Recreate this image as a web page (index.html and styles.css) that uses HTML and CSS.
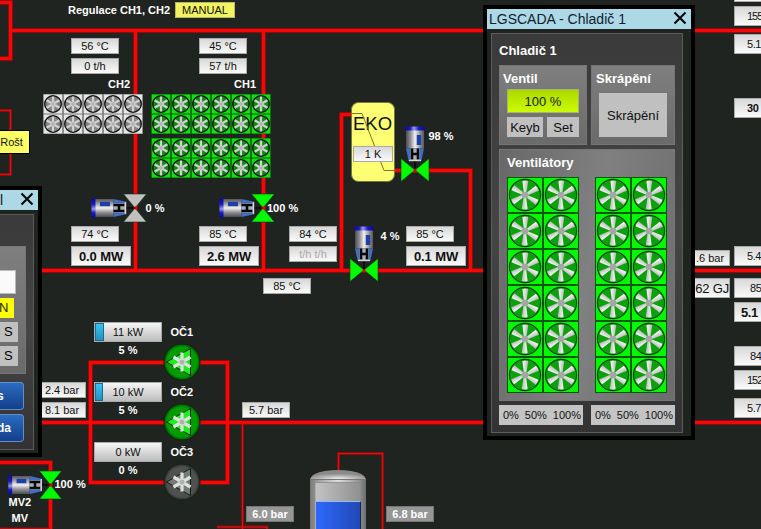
FILE: index.html
```html
<!DOCTYPE html>
<html lang="cs">
<head>
<meta charset="utf-8">
<title>LGSCADA</title>
<link rel="stylesheet" href="styles.css">
</head>
<body>
<main class="canvas">
<svg class="schema" width="761" height="529" viewBox="0 0 761 529">
  <defs>
    <linearGradient id="metal" x1="0" y1="0" x2="0" y2="1">
      <stop offset="0" stop-color="#55555c"/><stop offset=".2" stop-color="#8c8c90"/><stop offset=".5" stop-color="#f0f0f0"/><stop offset=".75" stop-color="#8e8e94"/><stop offset="1" stop-color="#4b4b50"/>
    </linearGradient>
    <linearGradient id="cap" x1="0" y1="0" x2="0" y2="1">
      <stop offset="0" stop-color="#0808a0"/><stop offset=".3" stop-color="#1a1ac0"/><stop offset=".55" stop-color="#9a9aec"/><stop offset=".75" stop-color="#1a1ac0"/><stop offset="1" stop-color="#0808a8"/>
    </linearGradient>
    <linearGradient id="blade" x1="0" y1="0" x2="1" y2="0">
      <stop offset="0" stop-color="#ffffff"/><stop offset="1" stop-color="#b4bab4"/>
    </linearGradient>
    <linearGradient id="tank" x1="0" y1="0" x2="1" y2="0">
      <stop offset="0" stop-color="#777"/><stop offset=".15" stop-color="#a0a0a0"/><stop offset=".5" stop-color="#dedede"/><stop offset=".85" stop-color="#9a9a9a"/><stop offset="1" stop-color="#6d6d6d"/>
    </linearGradient>
    <linearGradient id="tankWindow" x1="0" y1="0" x2="1" y2="0">
      <stop offset="0" stop-color="#c4c4c4"/><stop offset="1" stop-color="#8f8f8f"/>
    </linearGradient>
    <linearGradient id="water" x1="0" y1="0" x2="1" y2="0">
      <stop offset="0" stop-color="#2e68ff"/><stop offset="1" stop-color="#2049b4"/>
    </linearGradient>
    <radialGradient id="dome" cx=".5" cy="1" r=".6">
      <stop offset="0" stop-color="#eee"/><stop offset="1" stop-color="#8a8a8a"/>
    </radialGradient>
    <g id="blades">
      <path id="b" d="M-1.400 -3L-3.300 -13.800Q-.5 -14.900 2.500 -14.200L1.400 -3Z"/>
      <use href="#b" transform="rotate(60)"/><use href="#b" transform="rotate(120)"/><use href="#b" transform="rotate(180)"/><use href="#b" transform="rotate(240)"/><use href="#b" transform="rotate(300)"/>
    </g>
    <symbol id="fan" viewBox="0 0 36 36">
      <rect class="fan-case" x=".5" y=".5" width="35" height="35"/>
      <circle class="fan-ring" cx="18" cy="18" r="15.6"/>
      <g transform="translate(18 18) rotate(3)"><use href="#blades" fill="url(#blade)"/></g>
      <circle cx="18" cy="18" r="3.2" fill="#a6a6a6"/>
    </symbol>
    <g id="minifan">
      <rect class="mini-case" x="-10" y="-10" width="20" height="20"/>
      <rect class="mini-face" x="-9.2" y="-9.5" width="18.4" height="19"/>
      <circle class="mini-ring" r="8.3"/>
      <g class="mini-blades"><path d="M0 -7.4V7.4M-6.4 -3.7L6.4 3.7M-6.4 3.7L6.4 -3.7"/></g>
      <circle r="1.9" fill="#b4b4b4"/>
    </g>
    <g id="row5"><use href="#minifan"/><use href="#minifan" x="20"/><use href="#minifan" x="40"/><use href="#minifan" x="60"/><use href="#minifan" x="80"/></g>
    <g id="row6"><use href="#row5"/><use href="#minifan" x="100"/></g>
    <g id="valve">
      <path class="bowtie" d="M-11.5 -14H11.5L-11.5 14H11.5Z"/>
      <circle r="1.4" fill="#c00"/>
      <path d="M-10 0H-1" stroke="#000" stroke-width="1.2"/>
      <rect x="-43.500" y="-9.500" width="4.500" height="19" fill="url(#cap)"/>
      <rect x="-39.500" y="-9" width="18" height="18" fill="url(#metal)"/>
      <rect x="-35" y="-6.200" width="10" height="4.400" fill="#1d3fa8"/>
      <path d="M-21.500 -9L-9 -6.300V6.300L-21.500 9Z" fill="#3f6ec4"/>
      <path d="M-21.500 -4.800H-10V4.800H-21.500Z" fill="#a9adb4"/>
      <path d="M-21.500 -3H-10.500M-21.500 3H-10.500M-16 -3V3" stroke="#06070a" stroke-width="2.600" fill="none"/>
      <path d="M-9.500 -6V6" stroke="#d8d8d8" stroke-width="1.400"/>
    </g>
    <g id="pump">
      <circle class="pump-rim" r="18"/>
      <circle class="pump-face" r="15.800"/>
      <path class="pump-arrow" d="M-15.500 0L8.500 -13.500V13.500Z"/>
      <path d="M0 -9.500V9.500M-8.500 -5L8.500 5M-8.500 5L8.500 -5" stroke="#dde1dd" stroke-width="3.200"/>
      <circle r="2.500" fill="#b0b0b0"/>
    </g>
  </defs>

  <g class="pipes">
    <path class="pipe-edge" d="M0 2.500H10.500V58.500H0M10.500 30.500H761M135.500 30V270M263.500 30V270M42 270.500H761M42 422.500H761M341.500 270V114.500H352M394 170.500H470.500V270M90.500 362.500H227.500V482.500H90.500ZM0 462.500H50.500V529"/>
    <path class="pipe" d="M0 2.500H10.500V58.500H0M10.500 30.500H761M135.500 30V270M263.500 30V270M42 270.500H761M42 422.500H761M341.500 270V114.500H352M394 170.500H470.500V270M90.500 362.500H227.500V482.500H90.500ZM0 462.500H50.500V529"/>
    <path class="thin-edge" d="M0 110.500H10.500V174.500H0M242.500 424V529M217 527H267V529M338.500 472V453.500H382.500V529M0 529H50"/>
    <path class="thin" d="M0 110.500H10.500V174.500H0M242.500 424V529M217 527H267V529M338.500 472V453.500H382.500V529M0 529H50"/>
  </g>

  <g class="off"><use href="#row5" x="53" y="104"/><use href="#row5" x="53" y="124"/></g>
  <g class="on">
    <use href="#row6" x="161" y="104"/><use href="#row6" x="161" y="124"/>
    <use href="#row6" x="161" y="148"/><use href="#row6" x="161" y="168"/>
  </g>

  <rect x="351.500" y="102.500" width="43" height="79" rx="7" fill="#ffff73" stroke="#77773a"/>
  <text class="eko" x="353" y="130">EKO</text>
  <path d="M352 113.500H362L384 170.500H395" fill="none" stroke="#77772e"/>

  <use class="off" href="#valve" x="135" y="208"/>
  <use class="on" href="#valve" x="263" y="208"/>
  <use class="on" href="#valve" transform="translate(50.500 485) scale(.97 1)"/>
  <use class="on" href="#valve" transform="translate(415 170) rotate(90)"/>
  <use class="on" href="#valve" transform="translate(364 270) rotate(90)"/>

  <use class="on" href="#pump" x="182" y="362"/>
  <use class="on" href="#pump" x="182" y="422"/>
  <use class="off" href="#pump" x="182" y="482"/>

  <path d="M310 529V479H366V529Z" fill="url(#tank)"/>
  <path d="M310 479Q312 473 325 471Q338 469 351 471Q364 473 366 479Z" fill="url(#dome)"/>
  <path d="M310 479.500H366" stroke="#777"/>
  <rect x="315" y="482.500" width="46" height="47" fill="url(#tankWindow)" stroke="#888" stroke-width=".7"/>
  <rect x="316" y="501" width="45" height="28" fill="url(#water)"/>
  <path d="M316 501.500H360.500" fill="none" stroke="#9db8f0"/>
  <path d="M360.500 502V529" stroke="#16244c"/>

  <g class="labels">
    <text x="68" y="14">Regulace CH1, CH2</text>
    <text x="108" y="88">CH2</text><text x="234" y="88">CH1</text>
    <text x="145.500" y="212">0 %</text><text x="267" y="212">100 %</text>
    <text x="428.500" y="140">98 %</text><text x="380.500" y="240">4 %</text>
    <text x="170.500" y="336">OČ1</text><text x="170.500" y="396">OČ2</text><text x="170.500" y="456">OČ3</text>
    <text x="118.500" y="354">5 %</text><text x="118.500" y="414">5 %</text><text x="118.500" y="474">0 %</text>
    <text x="54.500" y="488">100 %</text><text x="8.500" y="506">MV2</text><text x="11.500" y="522">MV</text>
  </g>
</svg>

<div class="tag mode">MANUAL</div>
<div class="tag ch2-in">56 °C</div>
<div class="tag ch2-flow">0 t/h</div>
<div class="tag ch1-in">45 °C</div>
<div class="tag ch1-flow">57 t/h</div>
<div class="tag ch2-out">74 °C</div>
<div class="tag power ch2-power">0.0 MW</div>
<div class="tag ch1-out">85 °C</div>
<div class="tag power ch1-power">2.6 MW</div>
<div class="tag mix-temp">84 °C</div>
<div class="tag mix-flow">t/h t/h</div>
<div class="tag return-temp">85 °C</div>
<div class="tag eko-diff">1 K</div>
<div class="tag eko-temp">85 °C</div>
<div class="tag power eko-power">0.1 MW</div>
<div class="tag grate">Rošt</div>
<div class="tag p-upper">2.4 bar</div>
<div class="tag p-lower">8.1 bar</div>
<div class="tag drive oc1"><i class="level"></i>11 kW</div>
<div class="tag drive oc2"><i class="level"></i>10 kW</div>
<div class="tag drive oc3">0 kW</div>
<div class="tag p-outlet">5.7 bar</div>
<div class="tag muted tank-in">6.0 bar</div>
<div class="tag muted tank-out">6.8 bar</div>
<div class="tag p-main">.6 bar</div>
<div class="tag energy">62 GJ</div>
<div class="tag side s0"></div>
<div class="tag side s1">155</div>
<div class="tag side s2">5.1</div>
<div class="tag side s3">30</div>
<div class="tag side s4">5.4</div>
<div class="tag side s5">85</div>
<div class="tag side s6">5.1</div>
<div class="tag side s7">84</div>
<div class="tag side s8">152</div>
<div class="tag side s9">5.7</div>

<section class="window control">
  <header class="titlebar"><span>l</span>
    <svg class="close" width="14" height="14" viewBox="0 0 14 14"><path d="M1.500 1.500L12.500 12.500M12.500 1.500L1.500 12.500"/></svg></header>
  <div class="panel">
    <div class="group">
      <div class="field"></div>
      <div class="letter">N</div>
      <div class="step">S</div>
      <div class="step">S</div>
    </div>
    <div class="command short">s</div>
    <div class="command">da</div>
  </div>
</section>

<section class="window cooler">
  <header class="titlebar"><span>LGSCADA - Chladič 1</span>
    <svg class="close" width="14" height="14" viewBox="0 0 14 14"><path d="M1.500 1.500L12.500 12.500M12.500 1.500L1.500 12.500"/></svg></header>
  <div class="panel">
    <h1>Chladič 1</h1>
    <div class="top">
      <div class="group valve-group">
        <h2>Ventil</h2>
        <div class="value">100 %</div>
        <div class="actions"><div class="btn keyb">Keyb</div><div class="btn set">Set</div></div>
      </div>
      <div class="group spray-group">
        <h2>Skrápění</h2>
        <div class="btn spray">Skrápění</div>
      </div>
    </div>
    <div class="group fans-group">
      <h2>Ventilátory</h2>
      <div class="banks">
        <div class="bank"><svg><use href="#fan"/></svg><svg><use href="#fan"/></svg><svg><use href="#fan"/></svg><svg><use href="#fan"/></svg><svg><use href="#fan"/></svg><svg><use href="#fan"/></svg><svg><use href="#fan"/></svg><svg><use href="#fan"/></svg><svg><use href="#fan"/></svg><svg><use href="#fan"/></svg><svg><use href="#fan"/></svg><svg><use href="#fan"/></svg></div>
        <div class="bank"><svg><use href="#fan"/></svg><svg><use href="#fan"/></svg><svg><use href="#fan"/></svg><svg><use href="#fan"/></svg><svg><use href="#fan"/></svg><svg><use href="#fan"/></svg><svg><use href="#fan"/></svg><svg><use href="#fan"/></svg><svg><use href="#fan"/></svg><svg><use href="#fan"/></svg><svg><use href="#fan"/></svg><svg><use href="#fan"/></svg></div>
      </div>
    </div>
    <div class="speeds">
      <div class="speed"><span>0%</span><span>50%</span><span>100%</span></div>
      <div class="speed"><span>0%</span><span>50%</span><span>100%</span></div>
    </div>
  </div>
</section>
</main>
</body>
</html>
```
FILE: styles.css
```css
* { box-sizing: border-box; }
body { margin: 0; background: #202421; font-family: "Liberation Sans", Arial, sans-serif; }
.canvas { position: relative; width: 761px; height: 529px; overflow: hidden; background: #202421; }
.schema { display: block; }

/* pipes */
.pipes path { fill: none; }
.pipe-edge { stroke: #a50808; stroke-width: 4.6; }
.pipe { stroke: #fa0505; stroke-width: 3; }
.pipes .thin-edge { stroke: #8c0c0c; stroke-width: 2.8; }
.pipes .thin { stroke: #e01010; stroke-width: 1.2; }

/* devices */
.on { --main: #00fa00; --case: #10e010; --gap: #0a5a0a; --ring: #108a10; --rim: #067006; --face: #009c00; --arrow: #1cf01c; }
.off { --main: #c0c0c0; --case: #e6e6e6; --gap: #777; --ring: #848484; --rim: #3c3c3c; --face: #505050; --arrow: #787878; }
.bowtie { fill: var(--main); stroke: #123412; stroke-width: .6; }
.mini-case { fill: var(--gap); }
.mini-face { fill: var(--case); }
.mini-ring { fill: var(--ring); stroke: #151515; stroke-width: 1.4; }
.mini-blades { stroke: #d2d2d2; stroke-width: 2.3; }
.pump-rim { fill: var(--rim); stroke: #0b240b; stroke-width: 1; }
.pump-face { fill: var(--face); }
.pump-arrow { fill: var(--arrow); stroke: #0b200b; stroke-width: 1; }
.fan-case { fill: #00f800; stroke: #085808; }
.fan-ring { fill: #0da00d; stroke: #073807; stroke-width: 1.1; }

/* captions */
.labels text { fill: #fff; font-size: 11px; font-weight: bold; }
.eko { font-size: 18.5px; fill: #111; }

/* value tags on the process canvas */
.tag {
  position: absolute; width: 48px; height: 16px;
  display: flex; align-items: center; justify-content: center;
  border: 1px solid #aaa; background: linear-gradient(#d8d8d8, #fafafa);
  color: #101010; font-size: 11px; line-height: 1; white-space: nowrap;
}
.power { width: 60px; height: 20px; font-size: 13px; font-weight: bold; letter-spacing: -.1px; }
.mode { left: 175px; top: 2px; width: 60px; border-color: #b8b86a; background: #f2f262; }
.ch2-in { left: 71px; top: 38px; }
.ch2-flow { left: 71px; top: 58px; }
.ch1-in { left: 199px; top: 38px; }
.ch1-flow { left: 199px; top: 58px; }
.ch2-out { left: 71px; top: 226px; }
.ch2-power { left: 71px; top: 246px; }
.ch1-out { left: 199px; top: 226px; }
.ch1-power { left: 199px; top: 246px; }
.mix-temp { left: 289px; top: 226px; }
.mix-flow { left: 289px; top: 246px; color: #aaa; }
.return-temp { left: 263px; top: 278px; }
.eko-diff { left: 353px; top: 146px; width: 40px; }
.eko-temp { left: 406px; top: 226px; }
.eko-power { left: 406px; top: 246px; }
.grate { left: -10px; top: 130px; width: 40px; height: 24px; padding-left: 3px; border-color: #000; background: #ffff66; }
.p-upper { left: 38px; top: 382px; }
.p-lower { left: 38px; top: 402px; }
.drive { left: 94px; width: 68px; height: 20px; background: linear-gradient(#f6f6f6, #bcbcbc); }
.level { position: absolute; left: 0; top: 0; width: 9px; height: 18px; border: 1px solid #1a6c90; background: linear-gradient(#35c4f5, #2590bd); }
.oc1 { top: 322px; }
.oc2 { top: 382px; }
.oc2 .level { width: 8px; }
.oc3 { top: 442px; }
.p-outlet { left: 242px; top: 402px; }
.muted { border-color: #777; background: #969696; color: #fff; font-weight: bold; top: 506px; }
.tank-in { left: 246px; }
.tank-out { left: 386px; }
.p-main { left: 682px; top: 250px; padding-left: 8px; }
.energy { left: 682px; top: 278px; height: 20px; justify-content: flex-end; font-size: 13px; letter-spacing: -.2px; }
.side { left: 734px; width: 60px; height: 20px; justify-content: flex-start; padding-left: 12px; letter-spacing: -.4px; }
.s0 { top: -18px; }
.s1 { top: 6px; letter-spacing: -1px; }
.s2 { top: 34px; }
.s3 { top: 98px; font-weight: bold; }
.s4 { top: 246px; }
.s5 { top: 278px; padding-left: 15px; }
.s6 { top: 302px; padding-left: 6px; font-size: 13px; font-weight: bold; }
.s7 { top: 346px; padding-left: 15px; }
.s8 { top: 370px; letter-spacing: -1px; }
.s9 { top: 398px; }

/* floating windows */
.window { position: absolute; border: 4px solid #000; background: #202421; font-size: 13px; }
.titlebar { display: flex; align-items: center; justify-content: space-between; height: 20px; padding: 0 4px 0 2px; background: #add8e6; color: #102030; font-size: 14px; line-height: 20px; }
.close { display: block; margin-top: -2px; fill: none; stroke: #000; stroke-width: 2; }
.panel { border: 1px solid #5c5c5c; background: linear-gradient(#3a3a3a, #454545 50%, #333); }
.group { border: 1px solid #767676; background: linear-gradient(#7f7f7f, #6a6a6a); }
.btn { display: flex; align-items: center; justify-content: center; background: #c0c0c0; color: #111; }

.cooler { left: 483px; top: 5px; width: 212px; height: 435px; }
.cooler .panel { width: 192px; height: 400px; margin: 4px 0 0 4px; padding: 0 7px; }
h1, h2 { margin: 0; color: #fff; font-size: 13px; font-weight: bold; white-space: nowrap; }
h1 { height: 31px; line-height: 33px; }
h2 { line-height: 17px; }
.top { display: flex; gap: 4px; height: 80px; }
.valve-group { width: 88px; padding: 4px 7px; }
.valve-group h2 { margin-left: -4px; }
.spray-group { width: 84px; padding: 4px 7px; }
.spray-group h2 { margin-left: -3px; }
.value { display: flex; align-items: center; justify-content: center; height: 24px; margin-top: 2px; border: 1px solid #a4b46a; background: linear-gradient(#acd800, #ccfc00); color: #16200a; }
.actions { display: flex; gap: 4px; margin-top: 4px; }
.keyb { width: 36px; height: 20px; }
.set { width: 32px; height: 20px; }
.spray { height: 44px; margin-top: 6px; }
.fans-group { height: 252px; margin-top: 4px; padding: 4px 7px; background: linear-gradient(100deg, #686868, #808080 50%, #6c6c6c); }
.banks { display: flex; gap: 16px; margin-top: 6px; }
.bank { display: grid; grid-template-columns: 36px 36px; grid-auto-rows: 36px; }
.bank svg { display: block; width: 36px; height: 36px; }
.speeds { display: flex; gap: 8px; margin-top: 4px; }
.speed { display: flex; align-items: center; justify-content: space-between; width: 84px; height: 20px; padding: 0 2px 0 4px; background: #c4c4c4; color: #111; font-size: 11px; }

.control { left: -8px; top: 186px; width: 50px; height: 271px; }
.control .titlebar { padding-left: 4px; }
.control .panel { width: 38px; height: 236px; margin-top: 4px; padding: 31px 7px 0 0; }
.control .group { height: 128px; padding: 23px 7px 0 0; }
.field { width: 18px; height: 24px; border: 1px solid #bbb; background: #fafafa; }
.letter { width: 16px; height: 20px; margin-top: 4px; background: #ff0; color: #222; font-size: 13px; line-height: 20px; padding-left: 1px; }
.step { width: 20px; height: 20px; margin-top: 4px; padding-left: 6px; background: #c0c0c0; line-height: 20px; }
.command { width: 27px; height: 28px; margin-top: 8px; padding-right: 12px; border: 1px solid #5f8fce; border-left: 0; border-radius: 0 4px 4px 0; background: linear-gradient(#2c6cc0, #123f8a); color: #fff; font-size: 12px; font-weight: bold; line-height: 26px; text-align: right; }
.command + .command { margin-top: 4px; }
.short { padding-right: 21px; }
```
